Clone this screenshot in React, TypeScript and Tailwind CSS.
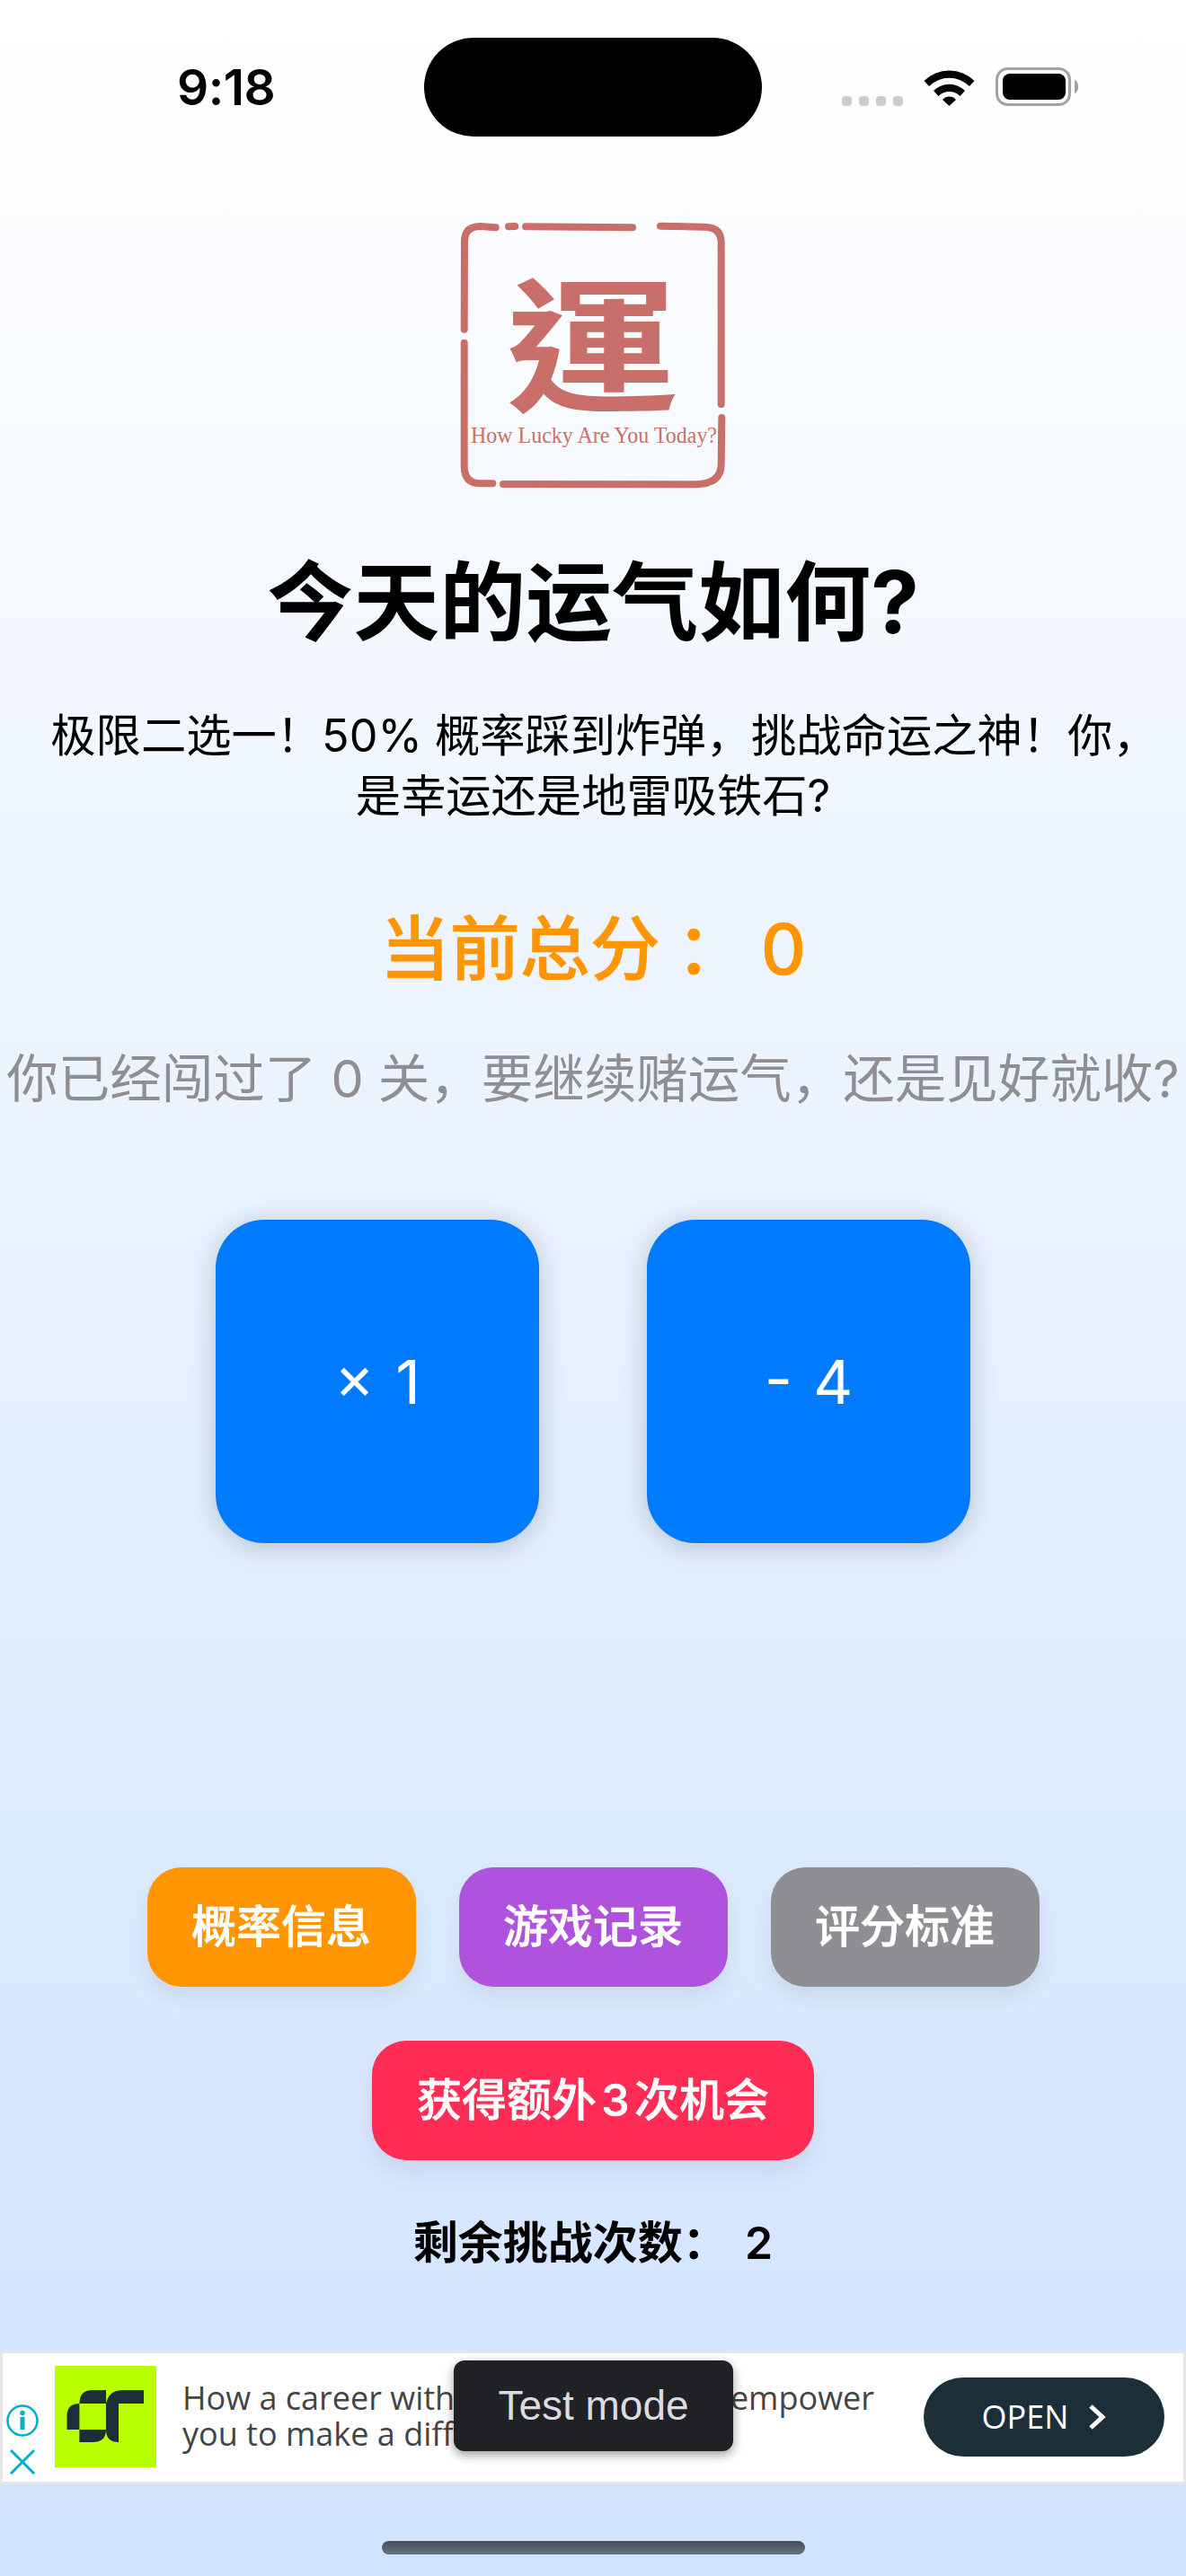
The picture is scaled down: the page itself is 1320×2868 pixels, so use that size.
const cjk = "font-['Inter','Noto_Sans_CJK_SC',sans-serif]";

function WifiIcon() {
  return (
    <svg width="57" height="42" viewBox="0 0 57 42" className="mr-[23px]">
      <path d="M0.5 14 A40 40 0 0 1 56.5 14 L51 20 A32 32 0 0 0 6 20 Z" fill="#000" />
      <path d="M11 25 A25 25 0 0 1 46 25 L40.5 31 A17 17 0 0 0 16.5 31 Z" fill="#000" />
      <path d="M21 35 A10 10 0 0 1 36 35 L28.5 42 Z" fill="#000" />
    </svg>
  );
}

function BatteryIcon() {
  return (
    <svg width="92" height="43" viewBox="0 0 92 43">
      <rect x="1.5" y="1.5" width="81" height="40" rx="12" fill="none" stroke="#a3a3a3" strokeWidth="3" />
      <rect x="8" y="7" width="70" height="29" rx="8" fill="#000" />
      <path d="M88 14 C91 15 92 18 92 21.5 C92 25 91 28 88 29 Z" fill="#a3a3a3" />
    </svg>
  );
}

function StatusBar() {
  return (
    <div className="flex h-[235px] items-start">
      <div className="w-[472px] pl-[197px] pt-[66px] font-['Inter',sans-serif] text-[55px] font-semibold leading-[62px] tracking-[-0.5px] text-black">
        9:18
      </div>
      <div className="mt-[42px] h-[110px] w-[376px] rounded-[55px] bg-black" />
      <div className="ml-[89px] mt-[75px] flex items-end">
        <div className="mr-[23px] flex gap-[8px]">
          {[0, 1, 2, 3].map((i) => (
            <div key={i} className="h-[11px] w-[11px] rounded-[4px] bg-[#cccccc]" />
          ))}
        </div>
        <WifiIcon />
        <BatteryIcon />
      </div>
    </div>
  );
}

function SealLogo() {
  const red = '#c96f6a';
  return (
    <svg width="320" height="320" viewBox="0 0 320 320" className="shrink-0">
      <g fill="none" stroke={red} strokeWidth="8" strokeLinecap="round">
        <path d="M51.7 18.3 L35 17 Q17.3 17 17 33.3 L16.7 131.7" />
        <path d="M16.7 146.7 L16.7 285 Q17 303.3 35 303.3 L48.3 303.3" />
        <path d="M60 304 L273.3 304.3 Q302.7 304 302.7 281.7 L303.3 230" />
        <path d="M302.7 215 L302.7 35 Q302.7 17.7 283.3 17.7 L235 16.7" />
        <path d="M85 17.3 L204 18.3" />
        <path d="M66 17.3 L73.3 17" />
      </g>
      <text
        x="159"
        y="211"
        textAnchor="middle"
        fontSize="160"
        fontWeight="700"
        textLength="192"
        lengthAdjust="spacingAndGlyphs"
        fill={red}
        className="font-['Noto_Sans_CJK_TC',sans-serif]"
      >
        運
      </text>
      <text
        x="24"
        y="258"
        fontSize="25"
        textLength="274"
        lengthAdjust="spacingAndGlyphs"
        fill={red}
        className="font-['Liberation_Serif',serif]"
      >
        How Lucky Are You Today?
      </text>
    </svg>
  );
}

function ChoiceCard({ label }: { label: string }) {
  return (
    <button className="flex h-[360px] w-[360px] items-center justify-center rounded-[54px] bg-[#007aff] font-['Inter',sans-serif] text-[68px] font-normal [word-spacing:4px] text-white shadow-[0_4px_30px_rgba(0,0,0,0.2)]">
      {label}
    </button>
  );
}

function ActionButton({ label, color }: { label: string; color: string }) {
  return (
    <button
      className={`h-[133px] rounded-[38px] px-[49.5px] ${cjk} text-[50px] font-medium [-webkit-text-stroke:0.6px_white] [word-spacing:-8px] whitespace-nowrap text-white shadow-[0_12px_24px_rgba(0,0,0,0.08)] ${color}`}
    >
      {label}
    </button>
  );
}

function AdBanner() {
  return (
    <div className="relative flex h-[149px] items-stretch border-[3px] border-[#e6e6e6] bg-white">
      <div className="mr-[14px] flex w-[44px] shrink-0 flex-col items-center">
        <svg width="36" height="36" viewBox="0 0 36 36" className="mt-[57px]">
          <circle cx="18" cy="18" r="16.5" fill="none" stroke="#00aecd" strokeWidth="2.5" />
          <circle cx="18" cy="9.5" r="2.8" fill="#00aecd" />
          <rect x="15.5" y="14" width="5" height="14" fill="#00aecd" />
        </svg>
        <svg width="28" height="28" viewBox="0 0 28 28" className="mt-[14px]">
          <path d="M1 1 L27 27 M27 1 L1 27" stroke="#00aecd" strokeWidth="3" />
        </svg>
      </div>
      <svg width="113" height="113" viewBox="0 0 113 113" className="mt-[14px] shrink-0">
        <rect width="113" height="113" fill="#b9ff00" />
        <g fill="#1c2f38">
          <path d="M27.4 42 Q27.4 27 42 27 H57 V42 Z" />
          <path d="M13.5 71 V56 Q13.5 42 27.4 42 V71 Z" />
          <path d="M27.4 71 H57 Q57 85 42 85 H27.4 Z" />
          <path d="M57 42 H71 V85 Q57 85 57 71 Z" />
          <path d="M57 42 Q60 27 76 27 H99 V42 Z" />
        </g>
      </svg>
      <div className="ml-[29px] flex-1 pt-[30px] font-['Open_Sans',sans-serif] text-[36px] leading-[40px] whitespace-nowrap text-[#444444]">
        <p>How a career with Deloitte Labs can empower</p>
        <p>you to make a difference</p>
      </div>
      <button className="absolute right-[21px] top-[27px] flex h-[88px] w-[268px] items-center justify-center gap-[22px] rounded-full bg-[#1c2f38] font-['Open_Sans',sans-serif] text-[36px] text-white">
        OPEN
        <svg width="20" height="30" viewBox="0 0 20 30">
          <path d="M3 3 L16 15 L3 27" fill="none" stroke="#fff" strokeWidth="5" />
        </svg>
      </button>
      <div className="absolute left-[502px] top-[8px] flex h-[101px] w-[311px] items-center justify-center rounded-[12px] bg-[#202124] font-['Liberation_Sans',sans-serif] text-[46px] text-[#dadce0] shadow-[0_4px_12px_rgba(0,0,0,0.4)]">
        Test mode
      </div>
    </div>
  );
}

export default function App() {
  return (
    <div className={`flex h-[2868px] w-[1320px] flex-col overflow-hidden bg-gradient-to-b from-white to-[#d0e3ff] ${cjk}`}>
      <StatusBar />

      <div className="flex justify-center">
        <SealLogo />
      </div>

      <h1 className="mt-[55px] text-center text-[96px] font-bold leading-[120px] text-black">今天的运气如何?</h1>

      <p className="mt-[55px] text-center text-[50.3px] leading-[67px] text-black">
        <span className="block whitespace-nowrap pl-[25px]">极限二选一！50% 概率踩到炸弹，挑战命运之神！你，</span>
        <span className="block whitespace-nowrap">是幸运还是地雷吸铁石?</span>
      </p>

      <p className="mt-[88px] text-center text-[78px] font-medium leading-[100px] [-webkit-text-stroke:0.6px_#ff9500] text-[#ff9500]">
        当前总分<span className="ml-[18px]">：</span><span className="ml-[16px]">0</span>
      </p>

      <p className="mt-[54px] whitespace-nowrap text-center text-[57.5px] leading-[80px] text-[#8e8e93]">
        你已经闯过了 0 关，要继续赌运气，还是见好就收?
      </p>

      <div className="mt-[117px] flex justify-center gap-[120px]">
        <ChoiceCard label="× 1" />
        <ChoiceCard label="- 4" />
      </div>

      <div className="mt-[361px] flex justify-center gap-[48px]">
        <ActionButton label="概率信息" color="bg-[#ff9500]" />
        <ActionButton label="游戏记录" color="bg-[#af52de]" />
        <ActionButton label="评分标准" color="bg-[#8e8e93]" />
      </div>

      <div className="mt-[60px] flex justify-center">
        <ActionButton label="获得额外 3 次机会" color="bg-[#ff2d55]" />
      </div>

      <p className="mt-[57px] whitespace-pre text-center text-[50px] font-semibold leading-[70px] [word-spacing:-3px] text-black">剩余挑战次数：  2</p>

      <div className="mt-[85px]">
        <AdBanner />
      </div>

      <div className="mx-auto mt-[63px] h-[15px] w-[471px] rounded-full bg-gradient-to-b from-[#454d59] to-[#6b7280]" />
    </div>
  );
}
